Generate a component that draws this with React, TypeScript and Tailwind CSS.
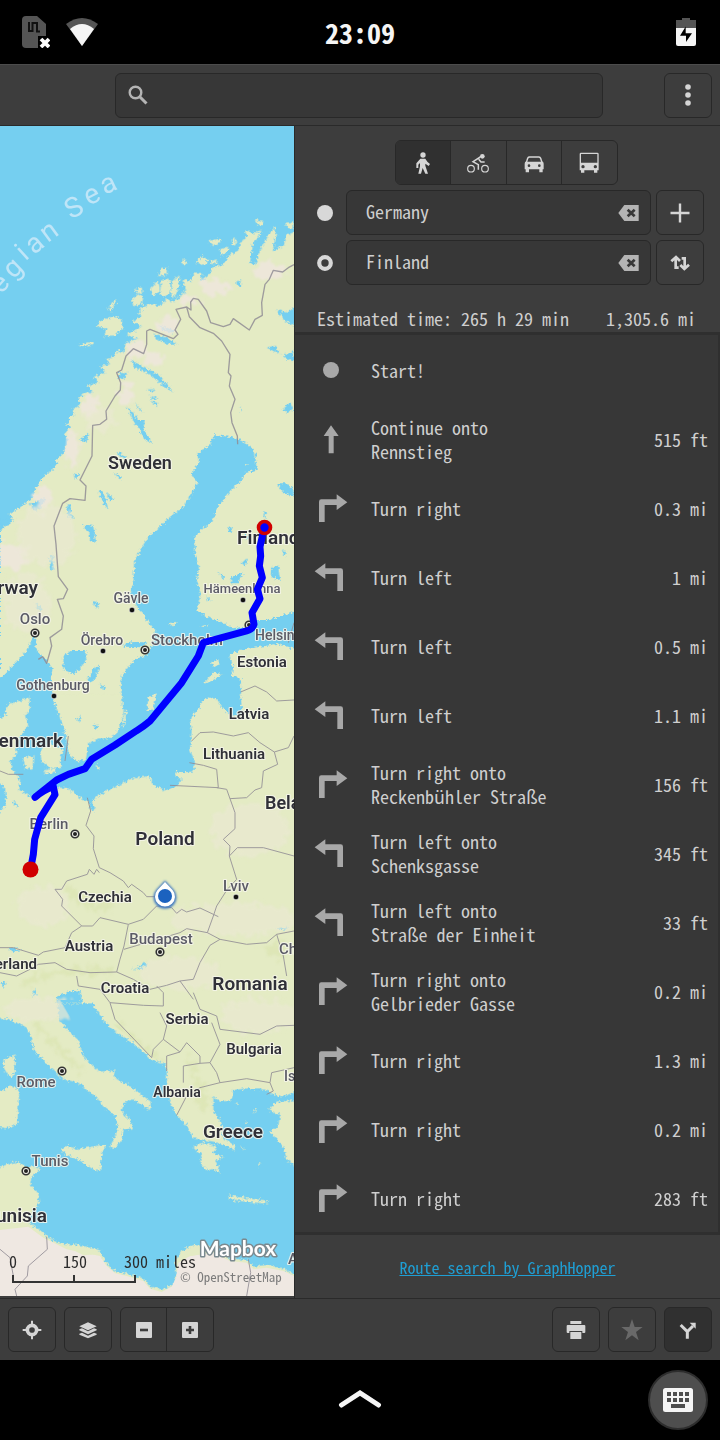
import React from 'react';

type Dir = 'start' | 'up' | 'right' | 'left';

const steps: { dir: Dir; text: string; dist: string }[] = [
  { dir: 'start', text: 'Start!', dist: '' },
  { dir: 'up', text: 'Continue onto Rennstieg', dist: '515 ft' },
  { dir: 'right', text: 'Turn right', dist: '0.3 mi' },
  { dir: 'left', text: 'Turn left', dist: '1 mi' },
  { dir: 'left', text: 'Turn left', dist: '0.5 mi' },
  { dir: 'left', text: 'Turn left', dist: '1.1 mi' },
  { dir: 'right', text: 'Turn right onto Reckenbühler Straße', dist: '156 ft' },
  { dir: 'left', text: 'Turn left onto Schenksgasse', dist: '345 ft' },
  { dir: 'left', text: 'Turn left onto Straße der Einheit', dist: '33 ft' },
  { dir: 'right', text: 'Turn right onto Gelbrieder Gasse', dist: '0.2 mi' },
  { dir: 'right', text: 'Turn right', dist: '1.3 mi' },
  { dir: 'right', text: 'Turn right', dist: '0.2 mi' },
  { dir: 'right', text: 'Turn right', dist: '283 ft' },
];

const button =
  'flex h-[45px] w-12 shrink-0 items-center justify-center rounded-[6px] border border-[#282828] bg-[#3d3d3d] text-[#d5d5d5]';

function StepIcon({ dir }: { dir: Dir }) {
  if (dir === 'start') {
    return (
      <svg className="h-[30px] w-[34px]" viewBox="0 0 34 30" aria-hidden="true">
        <circle cx="17" cy="15" r="8" fill="currentColor" />
      </svg>
    );
  }
  if (dir === 'up') {
    return (
      <svg className="h-[30px] w-[34px]" viewBox="55 255 102 90" aria-hidden="true">
        <path d="M84 291 106 259 129 291H114V343H99V291Z" fill="currentColor" />
      </svg>
    );
  }
  return (
    <svg
      className={dir === 'left' ? 'h-[30px] w-[34px] -scale-x-100' : 'h-[30px] w-[34px]'}
      viewBox="55 462 102 90"
      aria-hidden="true"
    >
      <path d="M70 549V488Q70 481 77 481H123V466L155 490 123 513V498H87V549Z" fill="currentColor" />
    </svg>
  );
}

function ClearIcon() {
  return (
    <svg className="h-4 w-[21px]" viewBox="966 236 63 48" aria-hidden="true">
      <path d="M967 260 985 236H1028V284H985Z" fill="#b4b4b4" />
      <path d="M995 250 1016 270M1016 250 995 270" stroke="#373737" strokeWidth="8" />
    </svg>
  );
}

const labels: { t: string; x: number; y: number; s: number; kind: 'country' | 'city'; a?: 'start' | 'middle' | 'end' }[] = [
  { t: 'Sweden', x: 140, y: 343, s: 18, kind: 'country' },
  { t: 'Finland', x: 237, y: 418, s: 19, kind: 'country', a: 'start' },
  { t: 'Norway', x: 38, y: 468, s: 19, kind: 'country', a: 'end' },
  { t: 'Denmark', x: 63, y: 621, s: 19, kind: 'country', a: 'end' },
  { t: 'Estonia', x: 262, y: 541, s: 15, kind: 'country' },
  { t: 'Latvia', x: 249, y: 593, s: 15, kind: 'country' },
  { t: 'Lithuania', x: 234, y: 633, s: 15, kind: 'country' },
  { t: 'Belarus', x: 265, y: 683, s: 18, kind: 'country', a: 'start' },
  { t: 'Poland', x: 165, y: 719, s: 19, kind: 'country' },
  { t: 'Czechia', x: 105, y: 776, s: 15, kind: 'country' },
  { t: 'Austria', x: 89, y: 825, s: 15, kind: 'country' },
  { t: 'Switzerland', x: 37, y: 843, s: 15, kind: 'country', a: 'end' },
  { t: 'Croatia', x: 125, y: 867, s: 15, kind: 'country' },
  { t: 'Romania', x: 250, y: 864, s: 19, kind: 'country' },
  { t: 'Serbia', x: 187, y: 898, s: 15, kind: 'country' },
  { t: 'Bulgaria', x: 254, y: 928, s: 15, kind: 'country' },
  { t: 'Albania', x: 177, y: 971, s: 14, kind: 'country' },
  { t: 'Greece', x: 233, y: 1012, s: 19, kind: 'country' },
  { t: 'Tunisia', x: 47, y: 1096, s: 19, kind: 'country', a: 'end' },
  { t: 'Gävle', x: 131, y: 477, s: 14, kind: 'city' },
  { t: 'Oslo', x: 35, y: 498, s: 15, kind: 'city' },
  { t: 'Örebro', x: 102, y: 519, s: 14, kind: 'city' },
  { t: 'Stockholm', x: 151, y: 519, s: 15, kind: 'city', a: 'start' },
  { t: 'Gothenburg', x: 53, y: 564, s: 14, kind: 'city' },
  { t: 'Hämeenlinna', x: 242, y: 467, s: 13, kind: 'city' },
  { t: 'Helsinki', x: 255, y: 514, s: 14, kind: 'city', a: 'start' },
  { t: 'Berlin', x: 49, y: 703, s: 15, kind: 'city' },
  { t: 'Lviv', x: 236, y: 765, s: 15, kind: 'city' },
  { t: 'Budapest', x: 161, y: 818, s: 15, kind: 'city' },
  { t: 'Chișinău', x: 279, y: 828, s: 15, kind: 'city', a: 'start' },
  { t: 'Rome', x: 36, y: 961, s: 15, kind: 'city' },
  { t: 'Istanbul', x: 284, y: 955, s: 14, kind: 'city', a: 'start' },
  { t: 'Tunis', x: 50, y: 1040, s: 15, kind: 'city' },
  { t: 'Alexandria', x: 288, y: 1138, s: 15, kind: 'city', a: 'start' },
];

const capitals: [number, number][] = [
  [35, 507], [145, 524], [249, 499], [75, 708], [160, 826], [62, 945], [26, 1045],
];
const towns: [number, number][] = [
  [132, 484], [103, 525], [54, 570], [243, 474], [236, 771],
];

/* Letters of "Norwegian Sea", centred on the curve along which the name runs. */
const seaName: [string, number, number, number][] = [
  ['e', 2, 476, -48], ['g', 42, 430, -44], ['i', 70, 384, -42], ['a', 107, 357, -40], ['n', 150, 320, -36],
  ['S', 220, 243, -30], ['e', 277, 211, -27], ['a', 327, 178, -25],
];

/* Terrain, borders and the route use a grid of three units to the pixel. */
function MapView() {
  return (
    <svg
      className="min-w-0 flex-1"
      viewBox="0 0 294 1170"
      preserveAspectRatio="xMinYMin slice"
      role="img"
      aria-label="Map of Europe with a walking route from Germany to Finland"
    >
      <defs>
        <filter id="coast" x="-5%" y="-5%" width="110%" height="110%">
          <feTurbulence type="fractalNoise" baseFrequency="0.12" numOctaves="3" seed="4" />
          <feDisplacementMap in="SourceGraphic" scale="17" xChannelSelector="R" yChannelSelector="G" />
        </filter>
        <filter id="soft" x="-10%" y="-10%" width="120%" height="120%">
          <feTurbulence type="fractalNoise" baseFrequency="0.05" numOctaves="3" seed="9" result="n" />
          <feDisplacementMap in="SourceGraphic" in2="n" scale="60" xChannelSelector="R" yChannelSelector="G" />
          <feGaussianBlur stdDeviation="3" />
        </filter>
        <filter id="glow" x="-30%" y="-30%" width="160%" height="160%">
          <feGaussianBlur stdDeviation="1" />
        </filter>
        <clipPath id="landclip">
          <path d="M204 882 235 850 290 750 375 660 425 590 480 540 560 500 575 460 655 445 690 390 740 350 750 420 790 400 830 380 882 340V1440H860L600 1490 590 1230 680 1130 760 1020 740 960 640 940 580 1100 420 1270 400 1400 460 1540 370 1660 360 1800 230 1900 150 1660 90 1580 0 1650V1200L60 1140 190 990Z" />
          <path d="M0 2010H200L290 2040 440 1960 500 1990 600 1960 600 1860H882V2860H640V3020H500L480 2810 320 2680 240 2622H180L300 2830 450 2930 380 2960 350 3060 260 2890 100 2770 0 2670Z" />
        </clipPath>
      </defs>
      <rect width="294" height="1170" fill="#75cff0" />

      <g transform="scale(0.33333)">
        <g filter="url(#coast)">
          <g fill="#e4ebc4">
            {/* Northern Scandinavia */}
            <path d="M196 900 222 868 218 850 240 838 235 815 262 800 278 800 262 780 295 768 282 752 318 740 300 720 330 715 318 700 345 690 352 672 370 678 378 652 400 645 415 640 380 625 410 612 425 600 396 585 420 575 418 550 450 535 480 540 500 520 525 528 530 510 555 500 548 460 575 465 580 440 600 440 620 455 640 425 670 415 690 385 712 375 725 345 740 335 735 312 760 322 785 310 775 335 760 350 750 410 765 418 780 370 795 350 808 320 825 303 828 325 818 375 850 360 862 325 880 318 900 320V900Z" />
            <path d="M325 548 345 522 348 530 330 560ZM300 585 340 570 365 580 370 605 345 628 310 630 320 608 290 600ZM235 658 280 645 275 655 240 664ZM395 520 415 505 430 510 425 535 400 540ZM480 430 500 425 500 448 475 450ZM450 490 475 465 480 495 460 510ZM485 460 510 462 512 495 492 515 480 500ZM520 460 540 448 535 485 520 520 512 500ZM545 400 560 402 556 416 548 414ZM585 408 608 390 625 400 615 418ZM625 345 660 338 665 345 640 360ZM660 370 685 362 680 382 662 388ZM695 340 706 335 708 352 698 358ZM765 280 790 285 785 298 770 295ZM855 292 882 285 880 310 866 306ZM405 490 425 485 428 500 410 502ZM632 405 650 400 648 412 634 414Z" />
            {/* Norway, Sweden and Finland */}
            <path transform="translate(0 882)" d="M205 -10 212 20 195 40 205 60 190 100 170 120 160 150 135 165 110 200 95 235 60 262 25 285 45 300 0 330V775L50 725 80 692 95 660 108 640 110 690 135 715 158 745 150 790 165 850H900V-10Z" />
            {/* Southern Sweden and Denmark */}
            <path transform="translate(0 1722)" d="M158 -15 175 40 190 80 200 120 205 160 230 185 258 178 265 130 295 115 330 115 350 100 370 50 372 -15Z" />
            <path transform="translate(0 1722)" d="M-10 70 0 40 30 10 60 5 88 -10 90 30 75 45 85 75 60 110 50 130 48 165 30 185 40 210 60 240 58 270 92 290 130 280 165 262 205 265 235 290 262 305 285 330 275 305 290 290 310 278 345 260 400 235 448 228 460 255 495 272 530 260 545 240 525 220 580 215 585 185 570 150 575 90 570 60 590 30 605 5 622 -12 650 -5 665 20 695 50 726 45 724 -20H900V910H-10Z" />
            <path transform="translate(0 1722)" d="M120 150 150 128 192 150 180 175 186 200 152 205 125 185ZM70 172 100 168 98 205 76 208ZM130 212 165 205 165 218 135 222ZM285 195 300 200 296 210ZM378 15 385 10 372 80 366 85Z" />
            {/* Mediterranean */}
            <g transform="translate(0 2622)">
              <path d="M-10 -15H172L178 60 210 98 235 120 250 170 280 200 300 215 345 212 340 230 400 265 452 305 450 330 430 320 400 298 375 305 365 330 375 345 392 360 395 385 370 390 365 420 345 445 330 440 345 410 355 390 345 345 310 320 290 290 265 275 240 250 185 235 160 210 100 150 95 110 75 80 20 55 -10 58Z" />
              <path d="M185 450 200 438 230 447 280 440 318 432 305 465 300 515 275 505 240 482 195 462ZM10 180 45 163 45 215 30 235 12 205ZM-10 275 10 270 35 255 58 275 52 370 20 385 -10 380Z" />
              <path d="M230 -15 250 5 268 -10 280 15 310 60 340 90 370 110 400 130 430 155 455 180 495 190 500 215 502 270 512 310 530 345 560 375 580 415 640 425 690 442 705 452 702 435 670 415 665 370 640 330 640 290 665 305 695 300 700 270 740 265 780 265 808 275 830 290 860 285 900 270V-15Z" />
              <path d="M580 440 610 428 650 440 640 460 672 472 645 482 662 520 635 505 620 512 600 490 605 465ZM900 300 830 305 805 330 840 345 835 380 810 395 850 440 860 480 900 505ZM688 585 740 595 808 602 800 610 750 608 690 597ZM772 495 780 490 778 503ZM705 310 712 306 712 318ZM755 330 772 328 760 336ZM735 365 745 368 740 374ZM720 440 735 445 728 450Z" />
              <path d="M-10 505 30 490 60 486 75 500 115 500 118 512 95 530 90 550 115 580 118 610 95 640 85 665 120 690 150 715 180 730 240 735 300 750 315 785 340 812 380 820 430 835 450 860 485 868 520 855 530 830 525 785 545 752 580 735 640 740 690 775 740 780 760 800 800 795 850 805 870 818 900 818V900H-10Z" />
            </g>
          </g>

          {/* Baltic, gulfs and lakes */}
          <g fill="#75cff0">
            <path transform="translate(0 882)" d="M630 75 640 45 700 52 740 70 765 95 770 150 740 155 720 185 690 215 650 265 640 300 610 325 585 350 585 400 597 440 590 480 602 520 592 570 620 590 650 600 670 610 700 625 735 620 760 600 800 600 850 585 900 570V690L830 672 780 680 720 690 688 705 700 740 695 770 722 775 724 882H695L665 862 650 838 622 832 603 850 596 870H370L362 800 365 770 385 740 410 715 440 705 462 670 465 630 440 600 430 580 410 560 392 520 400 480 402 430 420 390 445 350 480 320 510 290 550 260 575 220 592 190 575 160 597 130 592 100Z" />
            <path transform="translate(0 882)" d="M410 0 435 0 430 25 455 70 435 60 420 30ZM350 95 375 105 378 120 360 110ZM340 155 362 170 362 182ZM295 210 310 215 325 268 310 250ZM320 215 340 235 330 245ZM252 312 280 318 288 370 270 360 268 335 255 330ZM200 250 212 255 212 280 225 300 205 290ZM150 410 160 400 160 450 150 445ZM275 542 300 548 290 565ZM830 190 860 190 880 205 880 230 850 220ZM685 322 697 322 695 340 686 335ZM725 430 740 415 738 440ZM655 455 672 465 670 480ZM690 475 730 455 715 490 695 490ZM815 440 835 440 840 480 812 470ZM620 530 634 542 625 545ZM788 275 798 280 795 300ZM735 342 755 350 740 360ZM850 390 862 400 850 410ZM190 710 215 690 255 690 260 720 225 762 190 750ZM262 780 285 740 300 735 285 780 268 788ZM370 672 405 665 445 668 420 682 375 680ZM300 790 315 800 310 812ZM240 60 265 40 260 65ZM220 160 240 165 225 178ZM105 545 130 570 118 575ZM90 250 135 235 130 255 105 275ZM150 135 175 125 160 150ZM0 300 45 295 30 310 0 318Z" />
            <path d="M710 465 722 465 722 480 710 478ZM830 550 860 560 890 540V605L850 580ZM800 665 825 660 840 685 820 675ZM848 690 882 675 880 705 862 700ZM460 622 500 635 530 655 500 652 465 638ZM475 598 520 612 518 622 490 612ZM390 702 420 715 480 750 520 800 490 780 450 745 405 725ZM355 740 382 742 370 762 355 755ZM440 790 462 790 460 800ZM448 808 480 820 460 820ZM450 825 475 830 470 840ZM380 842 400 860 425 900 405 895 390 865ZM405 830 430 860 415 850ZM848 850 870 830 880 850 865 860ZM720 840 726 850 722 858ZM540 445 545 480 560 490 548 492 536 520 528 520 540 485ZM600 440 612 450 616 465 606 460Z" />
            <path transform="translate(0 1722)" d="M-10 235 15 265 20 310 -10 350ZM230 60 245 42 242 65ZM280 68 295 80 285 90ZM272 300 282 318 280 335 270 325ZM398 808 420 800 435 785 442 795 415 808ZM170 890 205 875 242 870 245 910 170 910ZM25 745 45 742 60 755 40 755ZM95 885 108 862 105 892ZM5 850 18 845 10 868ZM825 685 862 680 860 690ZM0 10 20 5 15 50 -5 55ZM40 300 55 320 42 315Z" />
          </g>
          <g fill="#e4ebc4">
            <path transform="translate(0 882)" d="M635 725 655 718 658 735 640 740ZM615 785 640 758 668 762 640 780 620 790ZM445 830 470 820 460 870 442 870ZM508 610 530 605 520 620ZM735 135 742 132 742 142ZM600 618 625 615 620 622Z" />
            <path transform="translate(0 1722)" d="M530 215 580 218 580 225 530 232Z" />
          </g>
        </g>

        {/* Relief and drier ground */}
        <g clipPath="url(#landclip)">
          <g filter="url(#soft)" fill="#efe7df">
            <g opacity="0.8">
              <ellipse cx="810" cy="435" rx="50" ry="24" />
              <ellipse cx="645" cy="485" rx="44" ry="26" />
              <ellipse cx="570" cy="520" rx="28" ry="12" />
              <ellipse cx="500" cy="600" rx="28" ry="30" />
              <ellipse cx="410" cy="670" rx="35" ry="25" />
              <ellipse cx="460" cy="700" rx="32" ry="22" />
              <ellipse cx="380" cy="800" rx="24" ry="32" />
              <ellipse cx="270" cy="840" rx="28" ry="28" />
              <ellipse cx="215" cy="970" rx="22" ry="60" />
              <ellipse cx="130" cy="1120" rx="28" ry="40" />
              <ellipse cx="30" cy="1290" rx="56" ry="40" />
            </g>
            <g fill="#eae9d2" opacity="0.7">
              <ellipse cx="300" cy="880" rx="50" ry="35" />
              <ellipse cx="140" cy="1230" rx="90" ry="90" />
              <ellipse cx="80" cy="1430" rx="70" ry="90" />
              <ellipse cx="700" cy="2380" rx="190" ry="50" />
              <ellipse cx="540" cy="2540" rx="120" ry="50" />
              <ellipse cx="130" cy="2650" rx="120" ry="36" />
              <ellipse cx="780" cy="2670" rx="120" ry="50" />
              <ellipse cx="750" cy="2110" rx="120" ry="80" />
              <ellipse cx="130" cy="2340" rx="80" ry="60" />
              <ellipse cx="60" cy="1850" rx="60" ry="90" />
            </g>
          </g>
          <g filter="url(#soft)" fill="#dce5b4" opacity="0.8">
            <path d="M60 2570Q180 2500 340 2530L330 2550Q180 2530 60 2590ZM200 2270Q270 2350 350 2330L340 2350Q250 2370 190 2280ZM350 2680 480 2800 470 2810 340 2700ZM780 2470 850 2440 840 2500ZM110 2680 250 2830 240 2840 100 2700ZM560 2770 640 2950 600 2940Z" />
          </g>
        </g>
        <path d="M0 3312 85 3302 130 3335 200 3370 300 3390 318 3418 345 3442 380 3450 430 3465 450 3488 485 3498 515 3482 528 3455 535 3410 570 3390 640 3380 690 3405 740 3410 760 3430 800 3425 850 3435 882 3450V3520H0Z" fill="#efe8e2" />
        <path d="M545 3395 580 3362 640 3366 600 3385ZM200 3362 270 3370 300 3384 250 3388Z" fill="#e4ebc4" />

        {/* Borders */}
        <g fill="none" stroke="#918d95" strokeWidth="4" strokeLinejoin="round" opacity="0.85">
          <path d="M882 416 865 425 848 438 820 433 808 460 795 475 785 530 787 568 765 580 748 612 700 578 690 595 670 602 632 590 620 555 595 520 580 517 572 528 573 552 560 543 528 550 542 580 525 612 534 625 520 638 450 610 440 615 440 655 431 683 400 668 378 690 365 732 350 740 362 770 361 792 345 810 318 855 320 880 300 895 278 898 276 990 240 1062 258 1080 255 1123 210 1118 188 1132 162 1200 168 1255 175 1352 203 1390 190 1418 172 1420 190 1470 185 1510 150 1535 155 1560 140 1612 128 1592 115 1600" />
          <path d="M560 543 568 572 600 605 640 622 665 645 690 685 685 740 693 750 688 780 705 820 692 860 696 890 712 930 713 955" />
          <path strokeWidth="3" d="M722 1698 765 1680 800 1698 830 1725 882 1722M882 1490 865 1550M882 1830 865 1865 823 1878 780 1850 745 1820 700 1830 640 1818 600 1820 575 1845M568 1910 610 1918 650 1930 655 1985 510 1978M823 1878 833 1915 790 1935 785 1985 765 1992 740 2015 690 2018M650 1985 680 1990 705 2060 705 2108 670 2140 690 2160 688 2190 712 2165 790 2165 882 2190M688 2190 710 2260 682 2290 650 2340 640 2370 622 2420 660 2440" />
          <path strokeWidth="3" d="M262 2015 272 2055 258 2098 282 2130 280 2168 298 2225 330 2240 370 2265 385 2285 395 2275 430 2300 440 2312 470 2312M298 2240 290 2230 282 2245 268 2230 262 2245 200 2265 185 2290 165 2290 188 2320 185 2340 245 2400 278 2400 300 2375 385 2395 430 2380 470 2340 515 2345 530 2362 545 2350 560 2358 600 2346 655 2372M245 2400 215 2420 195 2465 130 2478 115 2488 40 2465 0 2465M115 2515 165 2510 200 2530 270 2540 350 2538 360 2500 372 2460 385 2395M372 2470 540 2420 560 2408 622 2420M0 2540 50 2550 90 2530 115 2515M350 2538 400 2560 450 2590 500 2578 540 2565 580 2560 600 2510 630 2458 660 2440 740 2455 800 2450 830 2425 882 2415M830 2425 850 2490 860 2550" />
          <path strokeWidth="3" d="M230 2550 235 2580 300 2590 330 2630 430 2638 490 2640 490 2600 470 2580M330 2630 345 2680 455 2795 460 2770 490 2740 540 2778 500 2790 500 2835M490 2740 500 2700 480 2660M540 2565 580 2620M580 2600 600 2650 650 2670 660 2710 780 2725 830 2700 882 2698M635 2690 660 2755 630 2810 650 2840 660 2870 600 2885 560 2910 530 2968M540 2778 560 2750 600 2790 600 2812 550 2820 550 2870M600 2812 630 2810M660 2870 740 2858 810 2870 815 2840 882 2825M810 2870 820 2895 800 2905" />
          <path strokeWidth="3" d="M140 3332 142 3370 85 3420 82 3450 45 3490 50 3510M0 3370 30 3395 40 3450M745 3400 752 3440 740 3510M205 1830 195 1905M0 1935 25 1945 70 1945" />
        </g>
      </g>

      <g fontFamily="Roboto, sans-serif" fontSize="28" fill="#bfe5f7" textAnchor="middle">
        {seaName.map(([c, x, y, r], i) => (
          <text key={i} y={c === 'S' ? 10 : 7} transform={`translate(${x / 3} ${y / 3}) rotate(${r})`}>
            {c}
          </text>
        ))}
      </g>

      {capitals.map(([x, y]) => (
        <g key={`${x}-${y}`}>
          <circle cx={x} cy={y} r="3.8" fill="#f4f4ec" stroke="#333" strokeWidth="1.6" />
          <circle cx={x} cy={y} r="2" fill="#222" />
        </g>
      ))}
      {towns.map(([x, y]) => (
        <circle key={`${x}-${y}`} cx={x} cy={y} r="2.8" fill="#111" stroke="#fff" strokeWidth="0.6" />
      ))}
      <g fontFamily="Roboto, sans-serif" paintOrder="stroke" strokeLinejoin="round">
        {labels.map((l) => (
          <text
            key={l.t}
            x={l.x}
            y={l.y}
            fontSize={l.s}
            textAnchor={l.a ?? 'middle'}
            fontWeight={l.kind === 'country' ? 600 : 500}
            fill={l.kind === 'country' ? '#303038' : '#5b5b66'}
            stroke="#f6f6ec"
            strokeWidth="2.2"
            strokeOpacity="0.85"
          >
            {l.t}
          </text>
        ))}
      </g>

      <path
        transform="scale(0.33333)"
        d="M793 1204 780 1262 782 1290 778 1320 787 1355 772 1390 780 1418 756 1460 762 1495Q758 1510 740 1515L610 1550 595 1590 545 1670 450 1785Q430 1802 410 1814L345 1857 275 1900 255 1928 205 1945 170 1962 105 2014Q130 1992 160 1982L165 2006 122 2075 104 2140 100 2185 92 2228"
        fill="none"
        stroke="#0000ff"
        strokeWidth="21"
        strokeLinejoin="round"
        strokeLinecap="round"
      />
      <circle cx="264.5" cy="401.5" r="6" fill="#0000ff" stroke="#d00000" strokeWidth="3.6" />
      <circle cx="30.5" cy="743.5" r="8" fill="#d00000" />
      <path d="M165 754.5 173.500 763.500A11.5 11.5 0 1 1 156.500 763.500Z" fill="#4079c0" filter="url(#glow)" />
      <path d="M165 756 172.500 764A10 10 0 1 1 157.500 764Z" fill="#fff" />
      <circle cx="165" cy="770" r="7" fill="#1b62bf" />

      <g fontFamily="'Noto Sans Mono CJK SC', 'Liberation Mono', monospace" fill="#2c2c2c" fontSize="16">
        <text x="13" y="1142" textAnchor="middle">0</text>
        <text x="75" y="1142" textAnchor="middle">150</text>
        <text x="124" y="1142">300 miles</text>
        <text x="180" y="1156" fontSize="13" fill="#7b7b7b">© OpenStreetMap</text>
      </g>
      <path d="M13 1149V1156H135V1149M74 1149V1156" fill="none" stroke="#333" strokeWidth="2" />
      <text
        x="238"
        y="1130"
        textAnchor="middle"
        fontFamily="Lato, sans-serif"
        fontWeight="700"
        fontSize="21"
        fill="#fff"
        stroke="#7b8a90"
        strokeWidth="3"
        paintOrder="stroke"
        strokeLinejoin="round"
      >
        Mapbox
      </text>
    </svg>
  );
}

function StatusBar() {
  return (
    <header className="grid h-16 grid-cols-3 items-center bg-black px-[22px] text-[#f5f5f5]">
      <div className="flex items-center gap-4">
        <svg className="h-8 w-7" viewBox="0 0 28 32" aria-label="No SIM">
          <path d="M4 0H15L24 8V32H4Q0 32 0 28V4Q0 0 4 0Z" fill="#555" />
          <path d="M7 6V15H10.500V7H15V15.500H18" fill="none" stroke="#111" strokeWidth="2" />
          <path d="M16 20H28V32H16Z" fill="#000" />
          <path d="M19 23 27 31M27 23 19 31" stroke="#fff" strokeWidth="3.800" />
        </svg>
        <svg className="h-7 w-8" viewBox="0 0 32 28" aria-label="Wi-Fi">
          <path d="M0 6Q16 -6 32 6L16 28Z" fill="#555" />
          <path d="M4 11Q16 1 28 11L16 28Z" fill="#f5f5f5" />
        </svg>
      </div>
      <time className="text-center font-['Noto_Sans_Mono_CJK_SC','Liberation_Mono',monospace] text-[28px] leading-8 font-bold">
        23:09
      </time>
      <svg className="mr-0.5 h-7 w-5 justify-self-end" viewBox="0 0 20 28" aria-label="Battery charging">
        <path d="M6 0H14V2H20V10H0V2H6Z" fill="#555" />
        <path d="M0 10H20V26Q20 28 18 28H2Q0 28 0 26Z" fill="#f5f5f5" />
        <path d="M9.700 8.500 4 17.700H10V24L16 15.200H9.700Z" fill="#000" />
      </svg>
    </header>
  );
}

function RouteInput({ label, value, children, action, actionLabel }: {
  label: string;
  value: string;
  children: React.ReactNode;
  action: React.ReactNode;
  actionLabel: string;
}) {
  return (
    <div className="flex items-center">
      <div className="w-[29px] shrink-0">{children}</div>
      <div className="mr-[5px] flex h-[45px] min-w-0 flex-1 items-center rounded-[6px] border border-[#282828] bg-[#373737] pr-[11px] pl-[19px]">
        <input
          aria-label={label}
          defaultValue={value}
          className="min-w-0 flex-1 bg-transparent pb-1 text-[#cfcfcf] outline-none"
        />
        <button type="button" aria-label={`Clear ${label}`}>
          <ClearIcon />
        </button>
      </div>
      <button type="button" aria-label={actionLabel} className={button}>
        {action}
      </button>
    </div>
  );
}

const modeButton = 'flex w-14 items-center justify-center border-r border-[#282828] last:border-r-0';

function Modes() {
  return (
    <div className="mr-2 flex h-[45px] w-[223px] self-center overflow-hidden rounded-[6px] border border-[#282828] text-[#d5d5d5]">
      <button type="button" aria-label="Walk" aria-pressed="true" className={`${modeButton} bg-[#303030]`}>
        <svg className="size-6" viewBox="345 72 72 72" fill="currentColor" aria-hidden="true">
          <circle cx="381" cy="84" r="8" />
          <path d="M373 95H388L394 104 402 111 398 117 388 110V116L396 140H388L380 123 375 140H367L372 118V108L367 113V123H361V109Z" />
        </svg>
      </button>
      <button type="button" aria-label="Bike" className={modeButton}>
        <svg className="size-6" viewBox="512 76 72 72" fill="none" stroke="currentColor" aria-hidden="true">
          <circle cx="527" cy="129" r="10" strokeWidth="3.500" />
          <circle cx="569" cy="129" r="10" strokeWidth="3.500" />
          <circle cx="561" cy="92" r="7" fill="currentColor" stroke="none" />
          <path d="M555 94 533 108 549 117V132M550 101 557 109H568" strokeWidth="4.500" />
        </svg>
      </button>
      <button type="button" aria-label="Car" className={modeButton}>
        <svg className="size-6" viewBox="679 76 72 72" fill="currentColor" aria-hidden="true">
          <path
            fillRule="evenodd"
            d="M700 92H730Q735 92 737 97L740 107Q744 109 744 114V131H741V140H731V131H700V140H690V131H687V114Q687 109 691 107L694 97Q696 92 700 92ZM702 96Q699 96 698 99L695 108H736L733 99Q732 96 729 96ZM700 116A4 4 0 1 0 700 124A4 4 0 1 0 700 116ZM731 116A4 4 0 1 0 731 124A4 4 0 1 0 731 116Z"
          />
        </svg>
      </button>
      <button type="button" aria-label="Transit" className={modeButton}>
        <svg className="size-6" viewBox="846 76 72 72" fill="currentColor" aria-hidden="true">
          <path
            fillRule="evenodd"
            d="M858 81H907Q911 81 911 85V134H907V141H897V134H868V141H858V134H854V85Q854 81 858 81ZM858 85V111H907V85ZM864 118A5 5 0 1 0 864 128A5 5 0 1 0 864 118ZM901 118A5 5 0 1 0 901 128A5 5 0 1 0 901 118Z"
          />
        </svg>
      </button>
    </div>
  );
}

export default function App() {
  return (
    <div className="flex min-h-screen flex-col bg-black font-['Noto_Sans_Mono_CJK_SC','Liberation_Mono',monospace] text-[18px] leading-6 text-[#cfcfcf]">
      <StatusBar />

      <div className="flex h-[62px] items-center justify-between border-t border-b border-t-[#4c4c4c] border-b-[#2a2a2a] bg-[#3d3d3d] pr-2 pl-[115px]">
        <label className="mr-[61px] flex h-[45px] min-w-0 flex-1 items-center rounded-[6px] border border-[#282828] bg-[#373737] px-3">
          <svg className="size-5 shrink-0" viewBox="0 0 20 20" fill="none" stroke="#b4b4b4" aria-hidden="true">
            <circle cx="7.500" cy="7.500" r="5.800" strokeWidth="2.400" />
            <path d="M12 12 18.500 18.500" strokeWidth="3" />
          </svg>
          <input type="search" aria-label="Search" className="min-w-0 flex-1 bg-transparent px-2 outline-none" />
        </label>
        <button type="button" aria-label="Menu" className={button}>
          <svg className="size-6" viewBox="0 0 24 24" fill="currentColor" aria-hidden="true">
            <circle cx="12" cy="4" r="2.800" />
            <circle cx="12" cy="12" r="2.800" />
            <circle cx="12" cy="20" r="2.800" />
          </svg>
        </button>
      </div>

      <main className="flex flex-1 bg-[#3d3d3d]">
        <section aria-label="Map" className="flex min-w-0 flex-1 pb-0.5">
          <MapView />
        </section>
        <aside className="flex w-[426px] shrink-0 flex-col border-l border-[#2a2a2a]">
          <div className="flex flex-col gap-[5px] pt-3.5 pr-4 pl-[22px]">
            <Modes />
            <RouteInput
              label="Start"
              value="Germany"
              actionLabel="Add stop"
              action={
                <svg className="size-6" viewBox="0 0 24 24" stroke="currentColor" strokeWidth="2.400" aria-hidden="true">
                  <path d="M2.500 12H21.500M12 2.500V21.500" />
                </svg>
              }
            >
              <svg className="size-4" viewBox="0 0 16 16" aria-hidden="true">
                <circle cx="8" cy="8" r="8" fill="#d8d8d8" />
              </svg>
            </RouteInput>
            <RouteInput
              label="Destination"
              value="Finland"
              actionLabel="Reverse route"
              action={
                <svg className="size-6" viewBox="1117 373 72 72" fill="none" stroke="currentColor" strokeWidth="8" aria-hidden="true">
                  <path d="M1127 404 1141 391 1153 403M1140 392V423H1149M1180 414 1166 427 1154 415M1167 426V395H1158" />
                </svg>
              }
            >
              <svg className="size-4" viewBox="0 0 16 16" aria-hidden="true">
                <circle cx="8" cy="8" r="5.800" fill="none" stroke="#d8d8d8" strokeWidth="4.200" />
              </svg>
            </RouteInput>
          </div>
          <div className="mt-[21px] mb-0.5 flex justify-between pr-6 pl-[22px] whitespace-nowrap">
            <span>Estimated time: 265 h 29 min</span>
            <span>1,305.6 mi</span>
          </div>
          <ol className="border-y-[3px] border-r-2 border-[#2f2f2f] bg-[#373737]">
            {steps.map((s, i) => (
              <li key={i} className="flex h-[69px] items-center pr-2.5 pl-[19px]">
                <span className="mr-[23px] flex shrink-0 text-[#a8a8a8]">
                  <StepIcon dir={s.dir} />
                </span>
                <span className="w-[186px]">{s.text}</span>
                <span className="ml-auto whitespace-nowrap">{s.dist}</span>
              </li>
            ))}
          </ol>
          <div className="flex flex-1 items-center justify-center text-[16px]">
            <a href="https://www.graphhopper.com/" className="text-[#1f9fd4] underline">
              Route search by GraphHopper
            </a>
          </div>
        </aside>
      </main>

      <div className="flex h-[62px] items-center gap-2 border-t border-[#2a2a2a] bg-[#3d3d3d] px-2">
        <button type="button" aria-label="Current location" className={button}>
          <svg className="size-6" viewBox="60 352 72 72" fill="none" stroke="currentColor" aria-hidden="true">
            <circle cx="96" cy="388" r="14" strokeWidth="11" />
            <path d="M96 360V376M96 400V416M68 388H84M108 388H124" strokeWidth="6" />
          </svg>
        </button>
        <button type="button" aria-label="Map layers" className={button}>
          <svg className="size-6" viewBox="226 354 72 72" fill="currentColor" aria-hidden="true">
            <path d="M262 367 288 379 262 391 236 379ZM236 388 244 385 262 394 280 385 288 388V391L262 403 236 391ZM236 401 244 398 262 407 280 398 288 401V404L262 415 236 404Z" />
          </svg>
        </button>
        <div className="flex h-[45px] rounded-[6px] border border-[#282828] text-[#d5d5d5]">
          <button type="button" aria-label="Zoom out" className="flex w-[46px] items-center justify-center border-r border-[#282828]">
            <svg className="size-4" viewBox="0 0 16 16" aria-hidden="true">
              <rect width="16" height="16" rx="1" fill="currentColor" />
              <path d="M4 8H12" stroke="#3d3d3d" strokeWidth="2.600" />
            </svg>
          </button>
          <button type="button" aria-label="Zoom in" className="flex w-[46px] items-center justify-center">
            <svg className="size-4" viewBox="0 0 16 16" aria-hidden="true">
              <rect width="16" height="16" rx="1" fill="currentColor" />
              <path d="M4 8H12M8 4V12" stroke="#3d3d3d" strokeWidth="2.600" />
            </svg>
          </button>
        </div>
        <button type="button" aria-label="Print" className={`${button} ml-auto`}>
          <svg className="size-6" viewBox="614 351 72 72" fill="currentColor" aria-hidden="true">
            <path d="M633 360H666V369H633ZM625 372H675Q678 372 678 375V393Q678 396 675 396H669V390H630V396H625Q622 396 622 393V375Q622 372 625 372ZM633 393H666V414H633Z" />
          </svg>
        </button>
        <button type="button" aria-label="Favorite" disabled className={button}>
          <svg className="size-6" viewBox="781 354 72 72" fill="#696969" aria-hidden="true">
            <path d="M817 357 825 381H849L829 396 837 421 817 406 797 421 805 396 785 381H809Z" />
          </svg>
        </button>
        <button
          type="button"
          aria-label="Directions"
          aria-pressed="true"
          className="flex h-[45px] w-12 shrink-0 items-center justify-center rounded-[6px] border border-[#282828] bg-[#303030] text-[#d5d5d5]"
        >
          <svg className="size-6" viewBox="949 355 72 72" fill="none" stroke="currentColor" aria-hidden="true">
            <path d="M963 376 983 396 1000 379M983 393V417" strokeWidth="9" />
            <path d="M990 369H1008V387Z" fill="currentColor" stroke="none" />
          </svg>
        </button>
      </div>

      <nav className="grid h-20 grid-cols-3 items-center bg-black pr-3">
        <button type="button" aria-label="Home" className="col-start-2 ml-3 justify-self-center">
          <svg className="h-6 w-12" viewBox="0 0 48 24" fill="none" stroke="#f5f5f5" strokeWidth="5" strokeLinecap="round" aria-hidden="true">
            <path d="M5.500 17 24 5 42.500 17" />
          </svg>
        </button>
        <button
          type="button"
          aria-label="Keyboard"
          className="flex size-[60px] items-center justify-center justify-self-end rounded-full border-2 border-[#2d2d2d] bg-[#4e4e4e]"
        >
          <svg className="h-6 w-[30px]" viewBox="0 0 30 24" aria-hidden="true">
            <rect width="30" height="24" rx="2.500" fill="#f5f5f5" />
            <path d="M4 4h4v4H4zM10 4h4v4h-4zM16 4h4v4h-4zM22 4h4v4h-4zM4 10h4v4H4zM10 10h4v4h-4zM16 10h4v4h-4zM22 10h4v4h-4zM8 16h14v4H8z" fill="#4e4e4e" />
          </svg>
        </button>
      </nav>
    </div>
  );
}
